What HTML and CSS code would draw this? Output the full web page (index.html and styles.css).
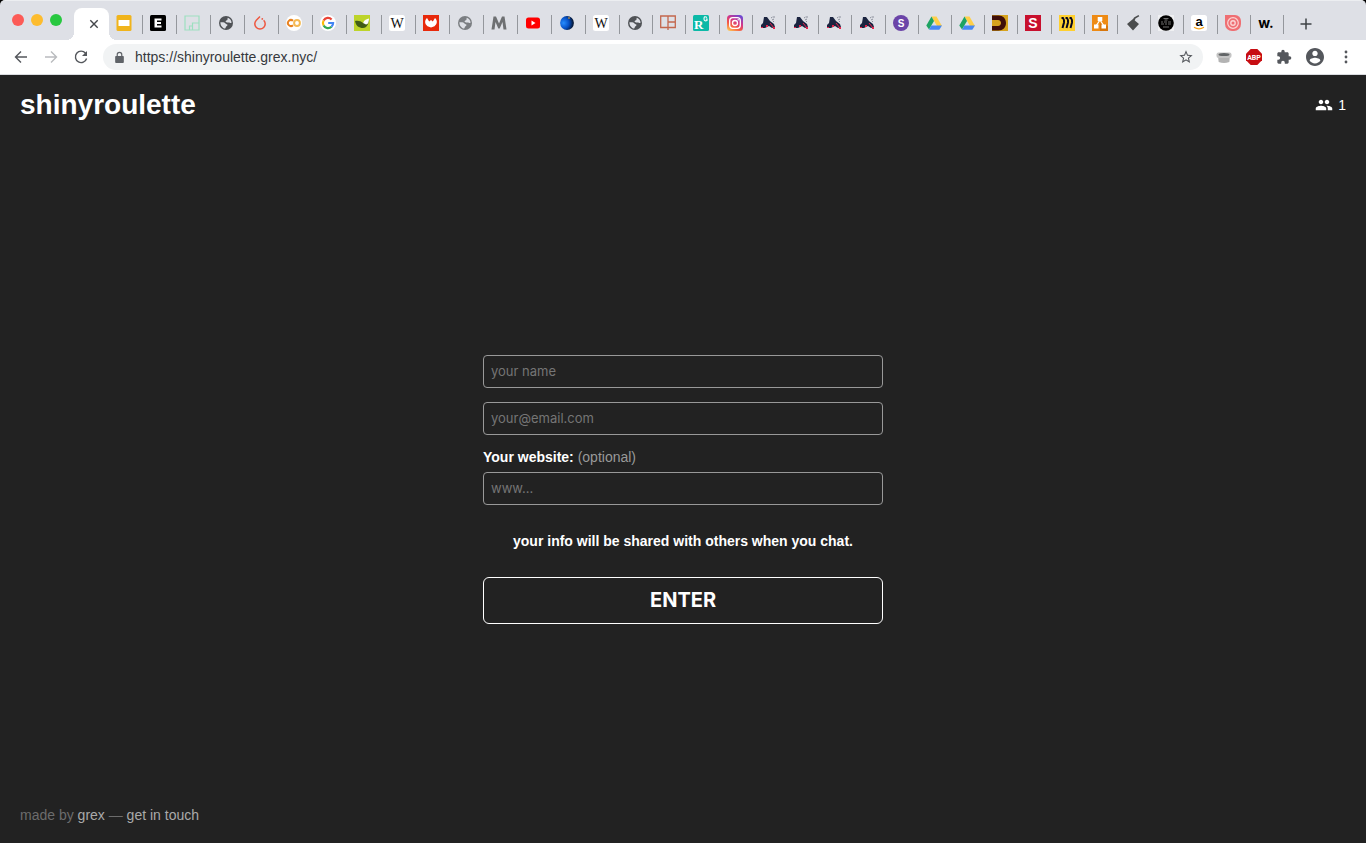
FILE: index.html
```html
<!DOCTYPE html>
<html lang="en">
<head>
<meta charset="utf-8">
<title>shinyroulette</title>
<link rel="stylesheet" href="styles.css">
</head>
<body>
<svg class="sprite" aria-hidden="true">
  <symbol id="globe" viewBox="0 0 16 16"><circle cx="8" cy="8" r="7" fill="currentColor"/><path d="M2.400 7.200c1.600 0 3-.2 4.300.6 1.300.8.6 1.200 2 1.500 1.200.3.9 1.500-.2 2-.9.400-.5 1.600-1.400 2.300C4.600 13.200 2.400 10.600 2.400 7.200z" fill="#dee0e6"/><path d="M9.800 2.700c2 .7 3.600 2.500 3.800 4.700-.7 1-1.600.8-2.400.2-.8-.5-2.300.3-3.300-.5-.9-.8.2-1.600 1-1.800.9-.3.4-1.700.9-2.600z" fill="#dee0e6"/></symbol>
  <symbol id="wiki" viewBox="0 0 16 16"><rect width="16" height="16" rx="2.500" fill="#fff"/><text x="8" y="12.500" text-anchor="middle" class="serif">W</text></symbol>
  <symbol id="cannon" viewBox="0 0 16 16"><path d="M1 13v-3l2-2 1-6h3l3 4 4 3 1 3-3 1-3-2-2 1-2 1z" fill="#1b2440"/><path d="M6 10h2v2H6zM13 12h2v2h-2zM1 12h2v1H1z" fill="#e8234c"/><path d="M11 3l1.500-1M12 5l2-1M14 1v2M13 7l1-1" stroke="#8b8f9b" stroke-width="1"/><path d="M10 8l4 5" stroke="#e8234c"/></symbol>
  <symbol id="drive" viewBox="0 0 16 16"><path d="M5.500 1.500h5L16 11h-5z" fill="#ffcf48"/><path d="M5.500 1.500L8 6 3 14.500.3 10.500z" fill="#1da362"/><path d="M5.400 10.500H16L13.300 14.700H3z" fill="#4688f4"/></symbol>
</svg>

<header class="browser">
  <div class="tabstrip">
    <div class="lights"><button class="light red" aria-label="Close window"></button><button class="light amber" aria-label="Minimize window"></button><button class="light green" aria-label="Zoom window"></button></div>
    <div class="active-tab"><button class="close" aria-label="Close tab"><svg viewBox="0 0 16 16"><path d="M4.300 4.300l7.400 7.400M11.700 4.300l-7.400 7.400" stroke="#44474b" stroke-width="1.400"/></svg></button></div>
    <div class="tabs early">
      <button class="tab" aria-label="Slides"><svg viewBox="0 0 16 16"><rect x=".5" width="15" height="16" rx="1.500" fill="#f0b41c"/><path d="M2.500 5h11v6h-11z" fill="#fff"/></svg></button>
      <button class="tab" aria-label="E"><svg viewBox="0 0 16 16"><rect width="16" height="16" rx="1.500"/><path d="M4.500 3.500h7v2H7v1.600h4v1.900H7v1.600h4.500v2h-7z" fill="#fff"/></svg></button>
      <button class="tab" aria-label="Squares"><svg viewBox="0 0 16 16" fill="none" stroke="#9ddfc0" stroke-width="1.200"><path d="M1 1h14v14H1zM8.500 15V8H15M5.500 15v-4h3"/></svg></button>
      <button class="tab globe" aria-label="Site"><svg><use href="#globe"/></svg></button>
      <button class="tab" aria-label="PyTorch"><svg viewBox="0 0 16 16"><path d="M8 1.500L4.300 5.200a5.200 5.200 0 1 0 7.400 0" fill="none" stroke="#ee5740" stroke-width="1.500"/><circle cx="10.300" cy="3.900" r=".9" fill="#ee5740"/></svg></button>
      <button class="tab" aria-label="Colab"><svg viewBox="0 0 16 16"><circle cx="8" cy="8" r="8" fill="#fff"/><g fill="none" stroke-width="2"><circle cx="11" cy="8" r="2.900" stroke="#f5ba55"/><path d="M7 10.200a3 3 0 1 1 0-4.400" stroke="#e98220"/></g></svg></button>
      <button class="tab" aria-label="Google"><svg viewBox="0 0 16 16"><circle cx="8" cy="8" r="8" fill="#fff"/><g fill="none" stroke-width="2.200"><path d="M3.600 5.500A5 5 0 0 1 11.600 4.400" stroke="#ea4335"/><path d="M3.600 5.500a5 5 0 0 0 0 5" stroke="#fbbc05"/><path d="M3.600 10.500a5 5 0 0 0 7.900 1.200" stroke="#34a853"/><path d="M8.200 8h4.900a5 5 0 0 1-1.600 3.700" stroke="#4285f4"/></g></svg></button>
      <button class="tab" aria-label="Leaf"><svg viewBox="0 0 16 16"><path d="M0 0h16v16H0z" fill="#bdd42a"/><path d="M1 6c3-.5 6 0 8 2 2-3 4-3 6-4 0 4-2 9-6 9-4 0-7-2-8-7z" fill="#415d17"/><path d="M9 8c1-3 4-4 6-4.500 0 3-1 6-3 6z" fill="#fff"/></svg></button>
      <button class="tab" aria-label="Wikipedia"><svg><use href="#wiki"/></svg></button>
      <button class="tab" aria-label="Fox"><svg viewBox="0 0 16 16"><path d="M0 0h16v16H0z" fill="#e8290b"/><path d="M4 3l2.200 3.500L8 5l1.800 1.500L12 3c3 3 2 6-.5 8.200L8 12.500l-3.500-1.300C2 9 1 6 4 3z" fill="#fff"/></svg></button>
      <button class="tab globe faded" aria-label="Site"><svg><use href="#globe"/></svg></button>
      <button class="tab" aria-label="M"><svg viewBox="0 0 16 16"><path d="M.5 14.500L2.500 1.500H5l3 7 3-7h2.500l2 13h-3L11.500 7 8.700 13.500H7.300L4.500 7l-1 7.500z" fill="#6e7072"/></svg></button>
      <button class="tab" aria-label="YouTube"><svg viewBox="0 0 16 16"><rect x="1" y="2.500" width="14" height="11" rx="2.500" fill="#f00"/><path d="M6.500 5.600l4 2.400-4 2.400z" fill="#fff"/></svg></button>
      <button class="tab" aria-label="Blue sphere"><svg viewBox="0 0 16 16"><defs><radialGradient id="ball" cx=".25" cy=".5" r=".8"><stop stop-color="#278dff"/><stop offset=".5" stop-color="#0650c5"/><stop offset=".9" stop-color="#06152e"/></radialGradient></defs><circle cx="8" cy="8" r="6.900" fill="url(#ball)"/><circle cx="10" cy="3" r="1" fill="#9c8356"/></svg></button>
      <button class="tab" aria-label="Wikipedia"><svg><use href="#wiki"/></svg></button>
    </div>
    <div class="tabs late">
      <button class="tab globe" aria-label="Site"><svg><use href="#globe"/></svg></button>
      <button class="tab" aria-label="Panels"><svg viewBox="0 0 16 16" fill="none" stroke="#c3674e" stroke-width="1.300"><path d="M.7 1h14.600v11.500H.7zM8 1v14M8 7h7"/></svg></button>
      <button class="tab" aria-label="ResearchGate"><svg viewBox="0 0 16 16"><rect width="16" height="16" rx="1.500" fill="#0cb9a7"/><text x="1" y="14" class="serif rg">R</text><path d="M14 2.500q-3-2-3 1.200 0 3 3 1.800V4h-1.200" fill="none" stroke="#fff" stroke-width="1.100"/></svg></button>
      <button class="tab" aria-label="Instagram"><svg viewBox="0 0 16 16"><defs><linearGradient id="insta" x1=".15" y1="1" x2=".75" y2="0"><stop stop-color="#fec553"/><stop offset=".35" stop-color="#f45745"/><stop offset=".65" stop-color="#cf358d"/><stop offset="1" stop-color="#6c49d2"/></linearGradient></defs><rect width="16" height="16" rx="3.500" fill="url(#insta)"/><g fill="none" stroke="#fff" stroke-width="1.300"><rect x="2.700" y="2.700" width="10.600" height="10.600" rx="3"/><circle cx="8" cy="8" r="2.500"/></g><circle cx="11.200" cy="4.800" r=".7" fill="#fff"/></svg></button>
      <button class="tab" aria-label="Game"><svg><use href="#cannon"/></svg></button>
      <button class="tab" aria-label="Game"><svg><use href="#cannon"/></svg></button>
      <button class="tab" aria-label="Game"><svg><use href="#cannon"/></svg></button>
      <button class="tab" aria-label="Game"><svg><use href="#cannon"/></svg></button>
      <button class="tab" aria-label="S"><svg viewBox="0 0 16 16"><circle cx="8" cy="8" r="8" fill="#6b44a8"/><text x="8" y="11.500" text-anchor="middle" class="letter s-small">S</text></svg></button>
      <button class="tab" aria-label="Drive"><svg><use href="#drive"/></svg></button>
      <button class="tab" aria-label="Drive"><svg><use href="#drive"/></svg></button>
      <button class="tab" aria-label="D"><svg viewBox="0 0 16 16"><path d="M0 0h16v16H0z" fill="#d7a31d"/><path d="M0 .5h6.500C11 .5 14 3.500 14 8s-3 7.500-7.500 7.500H0V11h6c2 0 3-1.500 3-3S8 5 6 5H0z" fill="#400f08"/></svg></button>
      <button class="tab" aria-label="S"><svg viewBox="0 0 16 16"><path d="M0 0h16v16H0z" fill="#c8102e"/><text x="8" y="13" text-anchor="middle" class="letter s-large">S</text></svg></button>
      <button class="tab" aria-label="Miro"><svg viewBox="0 0 16 16"><path d="M0 0h16v16H0z" fill="#ffd02f"/><path d="M2.500 3H4q1.500 2 1 4.500L3.500 13M6.500 3H8q1.500 2 1 4.500L7.500 13M10.500 3H12q1.500 2 1 4.500L11.500 13" fill="none" stroke="#090820" stroke-width="2"/></svg></button>
      <button class="tab" aria-label="Diagrams"><svg viewBox="0 0 16 16"><path d="M0 0h16v16H0z" fill="#ee8b15"/><path d="M8 16V8l8 3v5z" fill="#d7760c"/><path d="M8 5l-4 6M8 5l4 6" stroke="#fff" stroke-width="1.300"/><path d="M5.700 2h4.600v4H5.700zM2 9.500h4.500v4H2zM9.500 9.500H14v4H9.500z" fill="#fff"/></svg></button>
      <button class="tab" aria-label="Guitar"><svg viewBox="0 0 16 16"><path d="M2 9l6-5 6 5-6 6.500zM7.500 5L9 2.500 13.500 0l.8 1.300L10.500 3.500 9.500 6z" fill="#4b4d4e"/></svg></button>
      <button class="tab" aria-label="The Black"><svg viewBox="0 0 16 16"><path d="M0 0h16v16H0z" fill="#eff0f2"/><circle cx="8" cy="8" r="7.800"/><path d="M5.500 3.500h5M6.500 5h3M3 7h2M6 7h3M10 7h3M3 9h3M7 9h2M10 9h3M5 12h6" stroke="#8b8b8b" stroke-width=".8"/></svg></button>
      <button class="tab" aria-label="Amazon"><svg viewBox="0 0 16 16"><rect width="16" height="16" rx="2.500" fill="#fff"/><text x="8" y="11" text-anchor="middle" class="amazon">a</text><path d="M3 12.300q5 3.200 10 0" fill="none" stroke="#f6a21b" stroke-width="1.200"/></svg></button>
      <button class="tab" aria-label="Target"><svg viewBox="0 0 16 16"><path d="M0 0h10a6 6 0 0 1 6 6v3a7 7 0 0 1-7 7H7a7 7 0 0 1-7-7z" fill="#ef6f73"/><g fill="none" stroke="#fbd5d4"><circle cx="8" cy="8" r="5.300" stroke-width="1.200"/><circle cx="8" cy="8" r="2.200" stroke-width="1.400"/></g></svg></button>
      <button class="tab" aria-label="W."><svg viewBox="0 0 16 16"><text x="8" y="12.500" text-anchor="middle" class="wdot">w.</text></svg></button>
    </div>
    <button class="new-tab" aria-label="New tab"><svg viewBox="0 0 16 16"><path d="M8 2.500v11M2.500 8h11" stroke="#3e4145" stroke-width="1.500"/></svg></button>
  </div>
  <div class="toolbar">
    <nav class="nav">
      <button aria-label="Back"><svg viewBox="0 0 16 16" fill="none" stroke="#54575c" stroke-width="1.400"><path d="M14 8H2.500M8 2.500L2.500 8 8 13.500"/></svg></button>
      <button aria-label="Forward"><svg viewBox="0 0 16 16" fill="none" stroke="#b9bbbe" stroke-width="1.400"><path d="M2 8h11.500M8 2.500L13.500 8 8 13.500"/></svg></button>
      <button aria-label="Reload"><svg viewBox="0 0 16 16"><path d="M12.500 4.200A5.700 5.700 0 1 0 13.600 9.500" fill="none" stroke="#54575c" stroke-width="1.400"/><path d="M14 2v5H9z" fill="#54575c"/></svg></button>
    </nav>
    <div class="omnibox">
      <svg class="lock" viewBox="0 0 12 12"><rect x="2" y="4.500" width="8" height="6.500" rx=".8" fill="#5f6368"/><path d="M3.900 5V3.400a2.100 2.100 0 0 1 4.200 0V5" fill="none" stroke="#5f6368" stroke-width="1.100"/></svg>
      <input aria-label="Address" value="https://shinyroulette.grex.nyc/">
      <button aria-label="Bookmark"><svg viewBox="0 0 24 24"><path d="M22 9.240l-7.190-.62L12 2 9.190 8.630 2 9.240l5.460 4.730L5.820 21 12 17.270 18.180 21l-1.630-7.030L22 9.240zM12 15.400l-3.760 2.270 1-4.280-3.320-2.880 4.380-.38L12 6.100l1.710 4.040 4.380.38-3.320 2.880 1 4.280L12 15.400z" fill="#54575c"/></svg></button>
    </div>
    <div class="extensions">
      <button aria-label="Container"><svg viewBox="0 0 16 16"><path d="M2 7h12l-.7 6q-5.300 2-10.600 0z" fill="#b3b3b3"/><rect x=".5" y="3.500" width="15" height="5.500" rx="2" fill="#c4c4c4"/><ellipse cx="8" cy="5.500" rx="5.500" ry="1.600" fill="#626567"/></svg></button>
      <button aria-label="Adblock Plus"><svg viewBox="0 0 16 16"><path d="M4.700 0h6.600L16 4.700v6.600L11.300 16H4.700L0 11.300V4.700z" fill="#c70d12"/><text x="8" y="10.500" text-anchor="middle" class="abp">ABP</text></svg></button>
      <button aria-label="Extensions"><svg viewBox="0 0 24 24"><path d="M20.500 11H19V7c0-1.100-.9-2-2-2h-4V3.500a2.500 2.500 0 0 0-5 0V5H4c-1.100 0-2 .9-2 2v3.800h1.500a2.700 2.700 0 0 1 0 5.400H2V20c0 1.100.9 2 2 2h3.800v-1.500a2.700 2.700 0 0 1 5.400 0V22H17c1.100 0 2-.9 2-2v-4h1.500a2.500 2.500 0 0 0 0-5z" fill="#54575c"/></svg></button>
      <button aria-label="Profile"><svg class="profile" viewBox="2 2 20 20"><path d="M12 2C6.480 2 2 6.480 2 12s4.480 10 10 10 10-4.480 10-10S17.520 2 12 2zm0 3c1.660 0 3 1.340 3 3s-1.340 3-3 3-3-1.340-3-3 1.340-3 3-3zm0 14.200c-2.500 0-4.710-1.280-6-3.220.03-1.990 4-3.080 6-3.080 1.990 0 5.970 1.090 6 3.080-1.290 1.940-3.500 3.220-6 3.220z" fill="#54575c"/></svg></button>
      <button aria-label="Menu"><svg viewBox="0 0 16 16" fill="#54575c"><circle cx="8" cy="3" r="1.400"/><circle cx="8" cy="8" r="1.400"/><circle cx="8" cy="13" r="1.400"/></svg></button>
    </div>
  </div>
</header>

<div class="page">
  <header class="site-header">
    <h1>shinyroulette</h1>
    <div class="online"><svg viewBox="0 0 24 24"><path d="M16 11c1.660 0 2.990-1.340 2.990-3S17.660 5 16 5s-3 1.340-3 3 1.340 3 3 3zm-8 0c1.660 0 2.990-1.340 2.990-3S9.660 5 8 5 5 6.340 5 8s1.340 3 3 3zm0 2c-2.330 0-7 1.170-7 3.500V19h14v-2.500C15 14.170 10.330 13 8 13zm8 0c-.29 0-.62.02-.97.05 1.160.84 1.970 1.970 1.970 3.450V19h6v-2.500c0-2.330-4.670-3.500-7-3.500z" fill="#fff"/></svg><span>1</span></div>
  </header>
  <main>
    <form>
      <input class="field" type="text" aria-label="your name" placeholder="your name">
      <input class="field" type="email" aria-label="your email" placeholder="your@email.com">
      <div class="website">
        <label for="website"><b>Your website:</b> (optional)</label>
        <input class="field" id="website" type="text" placeholder="www...">
      </div>
      <p>your info will be shared with others when you chat.</p>
      <button class="enter" type="button">ENTER</button>
    </form>
  </main>
  <footer>made by <a href="#">grex</a> — <a href="#">get in touch</a></footer>
</div>
</body>
</html>
```
FILE: styles.css
```css
* { box-sizing: border-box; }
body {
  margin: 0;
  min-height: 100vh;
  display: flex;
  flex-direction: column;
  background: #222;
  color: #fff;
  font: 14px/20px "Liberation Sans", Arial, sans-serif;
}
button { margin: 0; padding: 0; border: 0; background: none; font: inherit; color: inherit; }
svg { display: block; flex: none; width: 16px; height: 16px; }
.sprite { position: absolute; width: 0; height: 0; }

.browser { background: #000; }
.tabstrip {
  display: flex;
  height: 40px;
  background: #dee0e6;
  border-top: 1px solid #eceef1;
  border-radius: 5px 5px 0 0;
}
.lights { display: flex; gap: 7px; width: 74px; padding: 13px 0 0 12px; }
.light { width: 12px; height: 12px; border-radius: 50%; }
.red { background: #fc5b57; }
.amber { background: #fdbc2e; }
.green { background: #28c840; }
.active-tab {
  position: relative;
  flex: none;
  width: 35px;
  margin-top: 7px;
  padding: 8px 0 0 12px;
  background: #fff;
  border-radius: 8px 8px 0 0;
}
.active-tab::before, .active-tab::after {
  content: "";
  position: absolute;
  bottom: 0;
  width: 8px;
  height: 8px;
}
.active-tab::before { right: 100%; background: radial-gradient(circle at 0 0, transparent 8px, #fff 8px); }
.active-tab::after { left: 100%; background: radial-gradient(circle at 100% 0, transparent 8px, #fff 8px); }
.tabs { display: flex; min-width: 0; padding-top: 14px; }
.early { flex: 511 1 0; }
.late { flex: 664 1 0; }
.tab {
  flex: 1 1 0;
  display: flex;
  align-items: flex-start;
  min-width: 0;
  height: 19px;
  padding-left: 7px;
  border-right: 1px solid #94979c;
}
.globe { color: #505357; }
.faded { color: #7b7e82; }
.new-tab { flex: none; width: 82px; padding: 0 0 0 14px; height: 45px; }

.serif { font: 14px "Liberation Serif", serif; fill: #111; }
.rg { font-size: 13px; font-weight: bold; fill: #fff; }
.letter { font-family: "Liberation Sans", sans-serif; font-weight: bold; fill: #fff; }
.s-small { font-size: 10px; }
.s-large { font-size: 14px; }
.amazon { font: bold 13px "Liberation Sans", sans-serif; }
.wdot { font: bold 14px Inter, sans-serif; }
.abp { font: bold 7px Roboto, sans-serif; fill: #fff; }

.toolbar {
  display: flex;
  align-items: center;
  height: 35px;
  background: #fff;
  border-bottom: 1px solid #dadce0;
}
.nav { display: flex; gap: 14px; padding: 0 14px 0 13px; }
.omnibox {
  flex: 1;
  display: flex;
  align-items: center;
  height: 26px;
  padding: 0 9px 0 10px;
  border-radius: 13px;
  background: #f1f3f4;
}
.lock { width: 13px; height: 13px; }
.omnibox input { flex: 1; min-width: 0; margin: 0 9px; padding: 0; border: 0; outline: 0; background: none; color: #36393d; font: inherit; }
.extensions { display: flex; align-items: center; gap: 14px; padding: 0 12px 0 13px; }
.extensions .profile { width: 18px; height: 18px; }

.page { flex: 1; display: grid; grid-template-rows: 60px 1fr; }
.site-header { display: flex; align-items: center; justify-content: space-between; padding: 0 20px; }
h1 { margin: 0; font-size: 28px; line-height: 32px; }
.online { display: flex; align-items: center; gap: 5px; }
.online svg { width: 18px; height: 18px; }
main, footer { grid-row: 2; grid-column: 1; }
main { display: flex; align-items: center; justify-content: center; }
form { width: 400px; max-width: 100%; display: flex; flex-direction: column; gap: 14px; }
.field {
  display: block;
  width: 100%;
  height: 33px;
  padding: 0 7px;
  border: 1px solid #999;
  border-radius: 4px;
  background: none;
  color: #fff;
  font: 13px Inter, sans-serif;
}
.field::placeholder { color: #757575; opacity: 1; }
.website { display: flex; flex-direction: column; gap: 5px; margin-top: -2px; }
.website label { color: #999; }
b { color: #fff; }
p { margin: 12px 0; text-align: center; font-weight: bold; }
.enter { height: 47px; border: 1px solid #fff; border-radius: 6px; font: bold 20px Inter, sans-serif; }
footer { align-self: end; justify-self: start; padding: 0 20px 18px; color: #6c6c6c; }
footer a { color: #aaa; text-decoration: none; }
```
